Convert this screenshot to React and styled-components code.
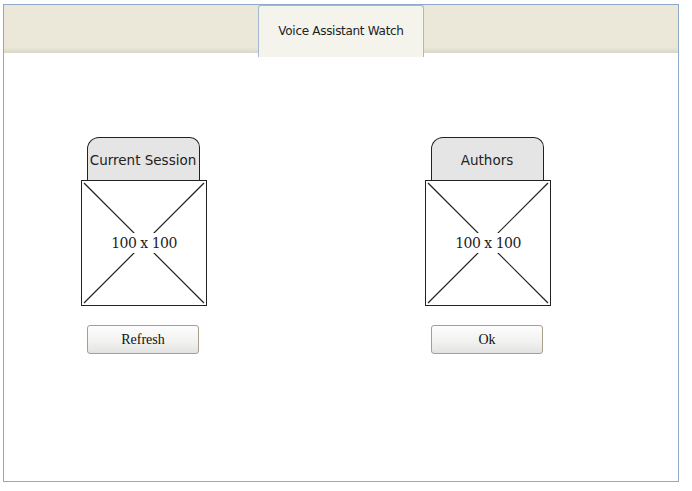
import styled, { createGlobalStyle } from "styled-components"

const GlobalStyle = createGlobalStyle`
  html, body {
    margin: 0;
    padding: 0;
    background: #ffffff;
  }
`

const Frame = styled.div`
  box-sizing: border-box;
  margin: 4px 0 0 3px;
  width: 676px;
  height: 478px;
  border: 1px solid #8ea8c8;
  background: #ffffff;
  display: flex;
  flex-direction: column;
`

const Header = styled.div`
  height: 48px;
  flex-shrink: 0;
  display: flex;
  justify-content: center;
  align-items: flex-start;
  background: linear-gradient(to bottom, #ebe8da 0%, #ebe8da 88%, #d9d6c8 100%);
`

const HeaderTab = styled.div`
  box-sizing: border-box;
  width: 166px;
  height: 52px;
  border: 1px solid #a4b8d2;
  border-bottom: none;
  border-radius: 3px 3px 0 0;
  background: #f4f3ec;
  display: flex;
  align-items: center;
  justify-content: center;
  padding-bottom: 1px;
  font-family: "DejaVu Sans", Tahoma, sans-serif;
  font-size: 12px;
  letter-spacing: -0.3px;
  color: #222;
  position: relative;
  z-index: 1;
`

const Body = styled.div`
  flex: 1;
  display: flex;
  align-items: flex-start;
  gap: 218px;
  padding: 88px 0 0 77px;
  margin-top: -4px;
`

const Column = styled.div`
  width: 126px;
  display: flex;
  flex-direction: column;
  align-items: center;
`

const CardTab = styled.div`
  box-sizing: border-box;
  width: 113px;
  height: 43px;
  margin-right: 2px;
  border: 1.5px solid #222;
  border-bottom: none;
  border-radius: 12px 10px 0 0;
  background: #e5e5e5;
  display: flex;
  align-items: center;
  justify-content: center;
  padding-top: 1px;
  font-family: "DejaVu Sans", "Liberation Sans", sans-serif;
  font-size: 13.5px;
  color: #222;
  white-space: nowrap;
  overflow: visible;
`

const Placeholder = styled.div`
  box-sizing: border-box;
  width: 126px;
  height: 126px;
  border: 1px solid #222;
  background: #ffffff;
  position: relative;
  display: flex;
  align-items: center;
  justify-content: center;
`

const Cross = styled.svg`
  position: absolute;
  inset: 0;
`

const PlaceholderLabel = styled.span`
  position: relative;
  background: #ffffff;
  padding: 2px 1px;
  font-family: "DejaVu Serif", "Liberation Serif", serif;
  font-size: 14px;
  letter-spacing: -0.5px;
  color: #222;
`

const Button = styled.button`
  box-sizing: border-box;
  margin-top: 19px;
  margin-right: 2px;
  width: 112px;
  height: 29px;
  border: 1px solid #a89e8c;
  border-radius: 3px;
  background: linear-gradient(to bottom, #fdfdfd 0%, #f1f1f0 60%, #e2e2e0 100%);
  font-family: "Liberation Serif", "Times New Roman", serif;
  font-size: 14px;
  color: #111;
  padding: 0;
  cursor: pointer;
`

const ImageBox = ({ label }) => (
    <Placeholder>
        <Cross width="124" height="124" viewBox="0 0 124 124">
            <line x1="2" y1="2" x2="122" y2="122" stroke="#222" strokeWidth="1.2" />
            <line x1="122" y1="2" x2="2" y2="122" stroke="#222" strokeWidth="1.2" />
        </Cross>
        <PlaceholderLabel>{label}</PlaceholderLabel>
    </Placeholder>
)

const Card = ({ title, action }) => (
    <Column>
        <CardTab>{title}</CardTab>
        <ImageBox label="100 x 100" />
        <Button>{action}</Button>
    </Column>
)

const App = () => {
    return (
        <>
            <GlobalStyle />
            <Frame>
                <Header>
                    <HeaderTab>Voice Assistant Watch</HeaderTab>
                </Header>
                <Body>
                    <Card title="Current Session" action="Refresh" />
                    <Card title="Authors" action="Ok" />
                </Body>
            </Frame>
        </>
    )
}

export default App
